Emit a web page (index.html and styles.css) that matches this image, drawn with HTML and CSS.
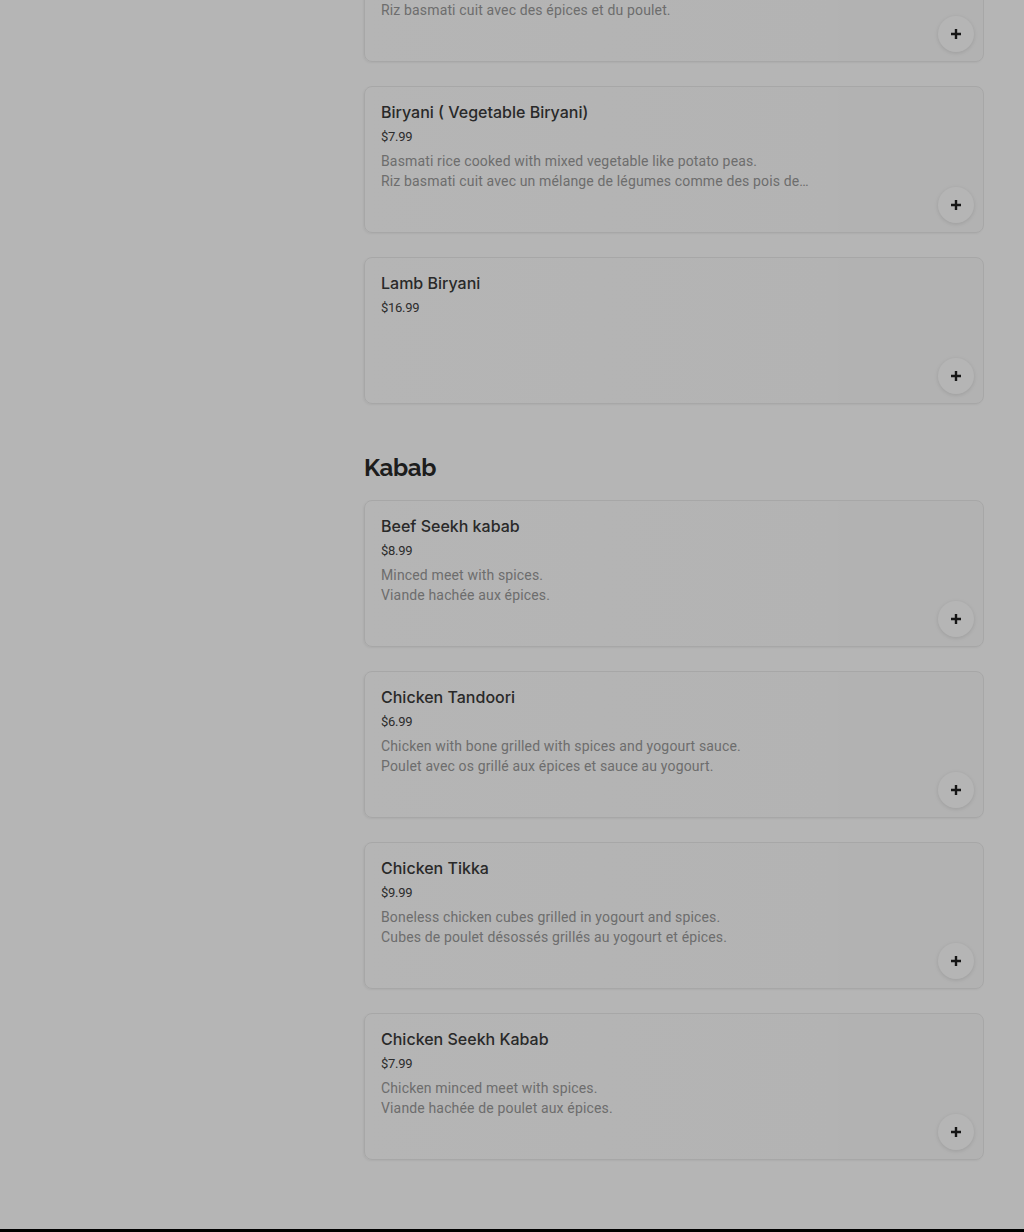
FILE: index.html
```html
<!DOCTYPE html>
<html lang="en">
<head>
<meta charset="utf-8">
<title>Menu</title>
<link rel="stylesheet" href="styles.css">
</head>
<body>
<div class="page">
  <main class="menu">
    <section class="section">
      <div class="card">
        <div class="info">
          <h3 class="title">Biryani ( Chicken Biryani)</h3>
          <div class="price">$8.99</div>
          <p class="desc">Basmati rice cooked with spices and chicken.<br>Riz basmati cuit avec des épices et du poulet.</p>
        </div>
        <button class="add" aria-label="Add"><svg viewBox="0 0 14 14" width="14" height="14"><path d="M7 2v10M2 7h10" stroke="#1f1f1f" stroke-width="2.4"/></svg></button>
      </div>
      <div class="card">
        <div class="info">
          <h3 class="title">Biryani ( Vegetable Biryani)</h3>
          <div class="price">$7.99</div>
          <p class="desc">Basmati rice cooked with mixed vegetable like potato peas.<br>Riz basmati cuit avec un mélange de légumes comme des pois de…</p>
        </div>
        <button class="add" aria-label="Add"><svg viewBox="0 0 14 14" width="14" height="14"><path d="M7 2v10M2 7h10" stroke="#1f1f1f" stroke-width="2.4"/></svg></button>
      </div>
      <div class="card">
        <div class="info">
          <h3 class="title">Lamb Biryani</h3>
          <div class="price">$16.99</div>
        </div>
        <button class="add" aria-label="Add"><svg viewBox="0 0 14 14" width="14" height="14"><path d="M7 2v10M2 7h10" stroke="#1f1f1f" stroke-width="2.4"/></svg></button>
      </div>
    </section>

    <section class="section">
      <h2 class="heading">Kabab</h2>
      <div class="card">
        <div class="info">
          <h3 class="title">Beef Seekh kabab</h3>
          <div class="price">$8.99</div>
          <p class="desc">Minced meet with spices.<br>Viande hachée aux épices.</p>
        </div>
        <button class="add" aria-label="Add"><svg viewBox="0 0 14 14" width="14" height="14"><path d="M7 2v10M2 7h10" stroke="#1f1f1f" stroke-width="2.4"/></svg></button>
      </div>
      <div class="card">
        <div class="info">
          <h3 class="title">Chicken Tandoori</h3>
          <div class="price">$6.99</div>
          <p class="desc">Chicken with bone grilled with spices and yogourt sauce.<br>Poulet avec os grillé aux épices et sauce au yogourt.</p>
        </div>
        <button class="add" aria-label="Add"><svg viewBox="0 0 14 14" width="14" height="14"><path d="M7 2v10M2 7h10" stroke="#1f1f1f" stroke-width="2.4"/></svg></button>
      </div>
      <div class="card">
        <div class="info">
          <h3 class="title">Chicken Tikka</h3>
          <div class="price">$9.99</div>
          <p class="desc">Boneless chicken cubes grilled in yogourt and spices.<br>Cubes de poulet désossés grillés au yogourt et épices.</p>
        </div>
        <button class="add" aria-label="Add"><svg viewBox="0 0 14 14" width="14" height="14"><path d="M7 2v10M2 7h10" stroke="#1f1f1f" stroke-width="2.4"/></svg></button>
      </div>
      <div class="card">
        <div class="info">
          <h3 class="title">Chicken Seekh Kabab</h3>
          <div class="price">$7.99</div>
          <p class="desc">Chicken minced meet with spices.<br>Viande hachée de poulet aux épices.</p>
        </div>
        <button class="add" aria-label="Add"><svg viewBox="0 0 14 14" width="14" height="14"><path d="M7 2v10M2 7h10" stroke="#1f1f1f" stroke-width="2.4"/></svg></button>
      </div>
    </section>
  </main>
  <footer class="footer"></footer>
</div>
<div class="overlay"></div>
</body>
</html>
```

FILE: styles.css
```css
* { box-sizing: border-box; }
html, body { margin: 0; padding: 0; }
body {
  background: #ffffff;
  font-family: Roboto, "Liberation Sans", sans-serif;
  color: #333;
  overflow: hidden;
}
.page {
  margin-top: -85px;
}
.menu {
  width: 620px;
  margin-left: 364px;
  display: flex;
  flex-direction: column;
  gap: 48px;
  padding-bottom: 69px;
}
.section {
  display: flex;
  flex-direction: column;
  gap: 24px;
}
.heading {
  margin: 0 0 -8px 0;
  font-family: Raleway, Montserrat, "Open Sans", sans-serif;
  font-size: 24px;
  line-height: 32px;
  font-weight: 700;
  color: #2a2a2a;
  letter-spacing: -0.4px;
}
.card {
  position: relative;
  height: 147px;
  border: 1px solid #ececec;
  border-radius: 8px;
  background: linear-gradient(90deg, #ffffff 0%, #fdfdfd 76%, #fbfbfb 77%, #fbfbfb 100%);
  box-shadow: -1px 1px 2px rgba(0,0,0,0.05);
  padding: 15px 16px 16px;
}
.title {
  margin: 0 0 5px 0;
  font-family: Inter, Roboto, sans-serif;
  font-size: 16px;
  line-height: 20px;
  font-weight: 500;
  color: #3a3a3a;
}
.price {
  font-size: 13px;
  line-height: 20px;
  color: #404040;
  letter-spacing: -0.3px;
}
.desc {
  margin: 4px 0 0 0;
  font-size: 14px;
  line-height: 20px;
  color: #9a9a9a;
  letter-spacing: 0.15px;
}
.add {
  position: absolute;
  right: 9px;
  bottom: 9px;
  width: 36px;
  height: 36px;
  border-radius: 50%;
  border: none;
  background: #ffffff;
  box-shadow: 0 1px 4px rgba(0,0,0,0.12);
  display: flex;
  align-items: center;
  justify-content: center;
  padding: 0;
}
.footer {
  height: 120px;
  background: #000;
}
.overlay {
  position: fixed;
  inset: 0;
  background: rgba(0,0,0,0.29);
}
```
